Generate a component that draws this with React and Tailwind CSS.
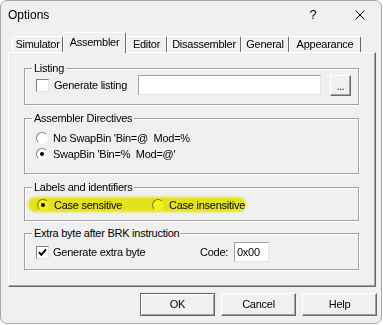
import React from 'react'

const font = { fontFamily: '"Liberation Sans", Arial, sans-serif' }

function CheckBox({ checked }) {
  return (
    <div className="w-[13px] h-[13px] shrink-0 bg-white border border-t-[#808080] border-l-[#808080] border-b-[#e3e3e3] border-r-[#e3e3e3] flex items-center justify-center">
      {checked && (
        <svg width="9" height="9" viewBox="0 0 9 9">
          <polyline points="1,4.2 3.3,6.8 8,1.4" fill="none" stroke="#000" strokeWidth="1.9" />
        </svg>
      )}
    </div>
  )
}

function Radio({ checked }) {
  return (
    <div className="w-[12px] h-[12px] shrink-0 rounded-full bg-white border border-t-[#808080] border-l-[#808080] border-b-[#f8f8f8] border-r-[#f8f8f8] flex items-center justify-center">
      {checked && <div className="w-[4px] h-[4px] rounded-full bg-black" />}
    </div>
  )
}

function Group({ title, className, children }) {
  return (
    <div className={`relative w-[335px] border border-[#a0a0a0] shadow-[1px_1px_0_#fff,inset_1px_1px_0_#fff] ${className}`}>
      <span className="absolute left-[7px] -top-[7px] px-[2px] bg-[#f0f0f0] leading-[13px]">{title}</span>
      {children}
    </div>
  )
}

function Tab({ label, width, selected }) {
  if (selected) {
    return (
      <div
        className="h-[21px] -mb-[1px] bg-[#f0f0f0] border-t border-l border-r border-t-white border-l-white border-r-[#696969] rounded-t-[2px] flex items-start justify-center pt-[3px] leading-[13px]"
        style={{ width }}
      >
        {label}
      </div>
    )
  }
  return (
    <div
      className="h-[16px] border-t border-l border-r border-t-white border-l-white border-r-[#696969] rounded-t-[2px] flex items-start justify-center pt-[1px] leading-[13px]"
      style={{ width }}
    >
      {label}
    </div>
  )
}

function Button({ label, isDefault }) {
  const edge = isDefault
    ? 'border border-[#646464] shadow-[inset_1px_1px_0_#fff,inset_-1px_-1px_0_#a0a0a0]'
    : 'border border-t-white border-l-white border-b-[#696969] border-r-[#696969] shadow-[inset_-1px_-1px_0_#a0a0a0]'
  return (
    <button className={`w-[75px] h-[23px] bg-[#f0f0f0] text-black text-[11px] tracking-[-0.25px] ${edge}`}>
      {label}
    </button>
  )
}

export default function App() {
  return (
    <div className="w-[383px] h-[325px] bg-white" style={font}>
      <div className="w-[382px] h-[324px] rounded-[7px] border border-[#a6a6a6] bg-[#f0f0f0] flex flex-col text-[11px] tracking-[-0.25px] text-black overflow-hidden">
        {/* title bar */}
        <div className="h-[27px] flex items-center pl-[7px] pr-[16px] shrink-0">
          <span className="text-[12px] tracking-normal">Options</span>
          <div className="flex-1" />
          <span className="w-[10px] text-center text-[13px] tracking-normal">?</span>
          <svg className="ml-[37px]" width="10" height="10" viewBox="0 0 10 10">
            <line x1="0.5" y1="0.5" x2="9.5" y2="9.5" stroke="#000" strokeWidth="1" />
            <line x1="9.5" y1="0.5" x2="0.5" y2="9.5" stroke="#000" strokeWidth="1" />
          </svg>
        </div>

        {/* tabs */}
        <div className="relative z-10 mt-[4px] h-[20px] flex items-end pl-[11px] shrink-0">
          <Tab label="Simulator" width={51} />
          <Tab label="Assembler" width={63} selected />
          <Tab label="Editor" width={41} />
          <Tab label="Disassembler" width={74} />
          <Tab label="General" width={48} />
          <Tab label="Appearance" width={72} />
        </div>

        {/* page */}
        <div className="ml-[7px] w-[368px] h-[235px] shrink-0 border border-t-white border-l-white border-b-[#696969] border-r-[#696969] shadow-[inset_-1px_-1px_0_#a0a0a0] pl-[15px] pt-[15px]">
          <Group title="Listing" className="h-[37px] pt-[6px]">
            <div className="h-[20px] flex items-center pl-[11px]">
              <CheckBox />
              <span className="ml-[5px] w-[84px]">Generate listing</span>
              <div className="w-[183px] h-[20px] bg-white border border-t-[#a0a0a0] border-l-[#a0a0a0] border-b-[#e3e3e3] border-r-[#e3e3e3]" />
              <button className="ml-[9px] w-[21px] h-[21px] bg-[#f0f0f0] border border-t-white border-l-white border-b-[#696969] border-r-[#696969] shadow-[inset_-1px_-1px_0_#a0a0a0] text-[10px] leading-[10px] pt-[4px]">
                ...
              </button>
            </div>
          </Group>

          <Group title="Assembler Directives" className="mt-[13px] h-[56px] pt-[11px] pl-[11px]">
            <div className="h-[16px] flex items-center">
              <Radio />
              <span className="ml-[5px] whitespace-pre">No SwapBin 'Bin=@  Mod=%</span>
            </div>
            <div className="h-[16px] flex items-center">
              <Radio checked />
              <span className="ml-[5px] whitespace-pre">SwapBin 'Bin=%  Mod=@'</span>
            </div>
          </Group>

          <Group title="Labels and identifiers" className="mt-[13px] h-[34px] pt-[9px] pl-[12px]">
            <div className="absolute left-[3px] top-[9px] w-[218px] h-[15px] rounded-full bg-[#f2f21c] mix-blend-multiply blur-[1px]" />
            <div className="h-[16px] flex items-center">
              <Radio checked />
              <span className="ml-[5px] w-[98px]">Case sensitive</span>
              <Radio />
              <span className="ml-[5px]">Case insensitive</span>
            </div>
          </Group>

          <Group title="Extra byte after BRK instruction" className="mt-[12px] h-[37px] pt-[8px] pl-[11px]">
            <div className="h-[20px] flex items-center">
              <CheckBox checked />
              <span className="ml-[4px] w-[147px]">Generate extra byte</span>
              <span className="w-[34px]">Code:</span>
              <div className="w-[35px] h-[20px] bg-white border border-t-[#a0a0a0] border-l-[#a0a0a0] border-b-[#e3e3e3] border-r-[#e3e3e3] flex items-center pl-[2px]">
                0x00
              </div>
            </div>
          </Group>
        </div>

        {/* buttons */}
        <div className="mt-[6px] flex justify-end gap-[6px] pr-[4px]">
          <Button label="OK" isDefault />
          <Button label="Cancel" />
          <Button label="Help" />
        </div>
      </div>
    </div>
  )
}
